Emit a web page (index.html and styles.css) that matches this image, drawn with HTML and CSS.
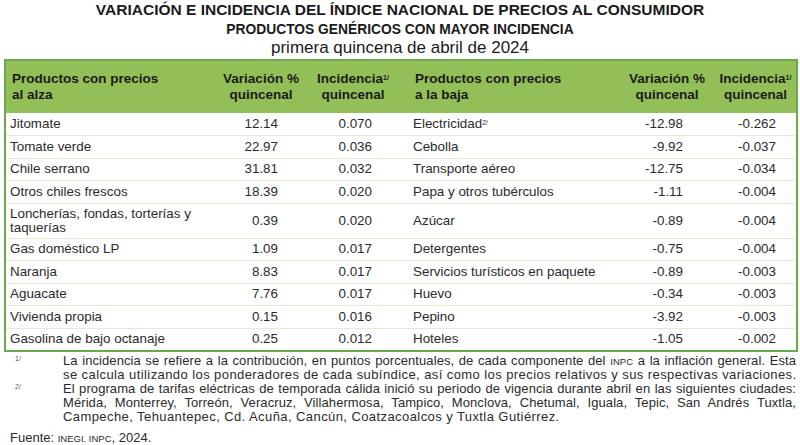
FILE: index.html
```html
<!DOCTYPE html>
<html lang="es">
<head>
<meta charset="utf-8">
<link rel="stylesheet" href="styles.css">
</head>
<body>
<div class="page">
  <header class="titles">
    <h1 class="title">VARIACIÓN E INCIDENCIA DEL ÍNDICE NACIONAL DE PRECIOS AL CONSUMIDOR</h1>
    <h2 class="subtitle">PRODUCTOS GENÉRICOS CON MAYOR INCIDENCIA</h2>
    <p class="period">primera quincena de abril de 2024</p>
  </header>
  <table class="data">
    <colgroup>
      <col class="c-name-l"><col class="c-var-l"><col class="c-inc-l">
      <col class="c-name-r"><col class="c-var-r"><col class="c-inc-r">
    </colgroup>
    <thead>
      <tr>
        <th class="name">Productos con precios<br>al alza</th>
        <th class="hnum">Variación %<br>quincenal</th>
        <th class="hnum">Incidencia<sup>1/</sup><br>quincenal</th>
        <th class="name name-r">Productos con precios<br>a la baja</th>
        <th class="hnum">Variación %<br>quincenal</th>
        <th class="hnum">Incidencia<sup>1/</sup><br>quincenal</th>
      </tr>
    </thead>
    <tbody>
      <tr><td class="name">Jitomate</td><td class="v1">12.14</td><td class="i1">0.070</td><td class="name name-r">Electricidad<sup>2/</sup></td><td class="v2">-12.98</td><td class="i2">-0.262</td></tr>
      <tr><td class="name">Tomate verde</td><td class="v1">22.97</td><td class="i1">0.036</td><td class="name name-r">Cebolla</td><td class="v2">-9.92</td><td class="i2">-0.037</td></tr>
      <tr><td class="name">Chile serrano</td><td class="v1">31.81</td><td class="i1">0.032</td><td class="name name-r">Transporte aéreo</td><td class="v2">-12.75</td><td class="i2">-0.034</td></tr>
      <tr><td class="name">Otros chiles frescos</td><td class="v1">18.39</td><td class="i1">0.020</td><td class="name name-r">Papa y otros tubérculos</td><td class="v2">-1.11</td><td class="i2">-0.004</td></tr>
      <tr class="tall"><td class="name">Loncherías, fondas, torterías y<br>taquerías</td><td class="v1">0.39</td><td class="i1">0.020</td><td class="name name-r">Azúcar</td><td class="v2">-0.89</td><td class="i2">-0.004</td></tr>
      <tr><td class="name">Gas doméstico LP</td><td class="v1">1.09</td><td class="i1">0.017</td><td class="name name-r">Detergentes</td><td class="v2">-0.75</td><td class="i2">-0.004</td></tr>
      <tr><td class="name">Naranja</td><td class="v1">8.83</td><td class="i1">0.017</td><td class="name name-r">Servicios turísticos en paquete</td><td class="v2">-0.89</td><td class="i2">-0.003</td></tr>
      <tr><td class="name">Aguacate</td><td class="v1">7.76</td><td class="i1">0.017</td><td class="name name-r">Huevo</td><td class="v2">-0.34</td><td class="i2">-0.003</td></tr>
      <tr><td class="name">Vivienda propia</td><td class="v1">0.15</td><td class="i1">0.016</td><td class="name name-r">Pepino</td><td class="v2">-3.92</td><td class="i2">-0.003</td></tr>
      <tr><td class="name">Gasolina de bajo octanaje</td><td class="v1">0.25</td><td class="i1">0.012</td><td class="name name-r">Hoteles</td><td class="v2">-1.05</td><td class="i2">-0.002</td></tr>
    </tbody>
  </table>
  <div class="notes">
    <div class="note">
      <span class="mark">1/</span>
      <div class="note-text">
        <span class="jl">La incidencia se refiere a la contribución, en puntos porcentuales, de cada componente del <span class="sc">INPC</span> a la inflación general. Esta</span>
        <span class="ll">se calcula utilizando los ponderadores de cada subíndice, así como los precios relativos y sus respectivas variaciones.</span>
      </div>
    </div>
    <div class="note">
      <span class="mark">2/</span>
      <div class="note-text">
        <span class="jl">El programa de tarifas eléctricas de temporada cálida inició su periodo de vigencia durante abril en las siguientes ciudades:</span>
        <span class="jl">Mérida, Monterrey, Torreón, Veracruz, Villahermosa, Tampico, Monclova, Chetumal, Iguala, Tepic, San Andrés Tuxtla,</span>
        <span class="ll">Campeche, Tehuantepec, Cd. Acuña, Cancún, Coatzacoalcos y Tuxtla Gutiérrez.</span>
      </div>
    </div>
    <p class="source">Fuente: <span class="sc">INEGI. INPC</span>, 2024.</p>
  </div>
</div>
</body>
</html>
```
FILE: styles.css
```css
* { box-sizing: border-box; }
html, body { margin: 0; padding: 0; background: #ffffff; }
body {
  font-family: "Liberation Sans", Arial, sans-serif;
  color: #2b2b2b;
  width: 800px;
  height: 445px;
  overflow: hidden;
}
.page { padding: 1px 4px 0 4px; }
.titles { text-align: center; color: #1a1a1a; }
.title {
  margin: 0;
  font-size: 15.5px;
  font-weight: bold;
  line-height: 18px;
}
.subtitle {
  margin: 0;
  font-size: 13.8px;
  font-weight: bold;
  line-height: 22px;
}
.period {
  margin: 0;
  font-size: 17px;
  line-height: 13px;
}
.data {
  margin-top: 5px;
  width: 792px;
  border-collapse: collapse;
  table-layout: fixed;
  border: 2px solid #6aaa4f;
  font-size: 13.4px;
}
.c-name-l { width: 210px; }
.c-var-l { width: 92px; }
.c-inc-l { width: 92px; }
.c-name-r { width: 220px; }
.c-var-r { width: 96px; }
.c-inc-r { width: 82px; }
thead tr { background: #92bf58; }
th {
  font-weight: bold;
  color: #1b1b1b;
  height: 53px;
  line-height: 16px;
  padding: 0;
  vertical-align: middle;
  font-size: 13.5px;
}
th.name { text-align: left; padding-left: 6px; }
th.name-r { padding-left: 16px; }
th.hnum { text-align: center; }
sup { font-size: 7px; vertical-align: top; position: relative; top: -1px; }
tbody tr { height: 22.5px; border-top: 1px solid #e2ead8; }
tbody tr:first-child { border-top: none; }
tbody tr.tall { height: 35px; }
td {
  padding: 0;
  line-height: 14px;
  vertical-align: middle;
  text-align: right;
}
td.name { text-align: left; padding-left: 4px; }
td.name-r { padding-left: 14px; }
td.v1 { padding-right: 29px; }
td.i1 { padding-right: 27px; }
td.v2 { padding-right: 32px; }
td.i2 { padding-right: 20px; }
.notes { font-size: 13px; line-height: 13.8px; color: #2b2b2b; margin-top: 2px; letter-spacing: 0.08px; }
.note { display: flex; }
.mark { width: 59px; flex: none; font-size: 7px; padding-left: 11px; line-height: 10px; color: #555; letter-spacing: 0; }
.note-text { flex: 1; min-width: 0; }
.jl { display: block; text-align: justify; text-align-last: justify; white-space: nowrap; }
.ll { display: block; white-space: nowrap; letter-spacing: 0.42px; }
.sc { font-size: 9.5px; }
.source { margin: 9px 0 0 6px; line-height: 12px; letter-spacing: 0; }
```
